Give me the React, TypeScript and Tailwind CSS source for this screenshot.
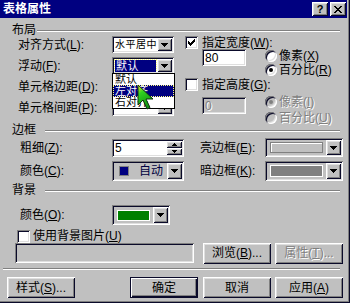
import React from "react";

const SUNKEN =
  "shadow-[inset_1px_1px_0_#808080,inset_-1px_-1px_0_#ffffff,inset_2px_2px_0_#0a0a2a,inset_-2px_-2px_0_#dfdfdf]";
const RAISED =
  "shadow-[inset_1px_1px_0_#ffffff,inset_-1px_-1px_0_#0a0a2a,inset_2px_2px_0_#dfdfdf,inset_-2px_-2px_0_#808080]";

function Acc({ k }: { k: string }) {
  return (
    <>
      (<span className="underline underline-offset-1">{k}</span>)
    </>
  );
}

function Arrow() {
  return (
    <svg width="7" height="4" viewBox="0 0 7 4" shapeRendering="crispEdges">
      <rect x="0" y="0" width="7" height="1" fill="#000" />
      <rect x="1" y="1" width="5" height="1" fill="#000" />
      <rect x="2" y="2" width="3" height="1" fill="#000" />
      <rect x="3" y="3" width="1" height="1" fill="#000" />
    </svg>
  );
}

function DropBtn() {
  return (
    <div className={`w-[15px] h-full flex items-center justify-center bg-[#c0c0c0] ${RAISED}`}>
      <Arrow />
    </div>
  );
}

function Combo({ text, focused, className }: { text?: string; focused?: boolean; className: string }) {
  return (
    <div className={`flex p-[2px] bg-white ${SUNKEN} ${className}`}>
      <div className="flex-1 min-w-0 flex items-center pl-[1px] overflow-hidden whitespace-nowrap text-[10px] tracking-[0.5px]">
        {focused ? (
          <div className="w-full mr-[1px] h-[12px] bg-[#000080] text-white outline-1 outline-dotted outline-[#ffff80] leading-[12px] pl-[1px] text-[11px]">
            {text}
          </div>
        ) : (
          <span>{text}</span>
        )}
      </div>
      <DropBtn />
    </div>
  );
}

function Check({ checked }: { checked?: boolean }) {
  return (
    <div className={`w-[13px] h-[13px] bg-white ${SUNKEN} flex items-center justify-center`}>
      {checked && (
        <svg width="7" height="7" viewBox="0 0 7 7" shapeRendering="crispEdges">
          <path d="M0 2h1v1h1v1h1v-1h1v-1h1v-1h1v-1h1v3h-1v1h-1v1h-1v1h-1v1h-1v-1h-1v-1h-1z" fill="#000" />
        </svg>
      )}
    </div>
  );
}

function Radio({ checked, disabled }: { checked?: boolean; disabled?: boolean }) {
  return (
    <div
      className={`w-[12px] h-[12px] rounded-full flex items-center justify-center ${
        disabled ? "bg-[#c0c0c0]" : "bg-white"
      } shadow-[inset_1px_1px_0_#808080,inset_-1px_-1px_0_#ffffff,inset_2px_2px_0_#0a0a2a,inset_-2px_-2px_0_#dfdfdf]`}
    >
      {checked && <div className={`w-[4px] h-[4px] rounded-full ${disabled ? "bg-[#808080]" : "bg-black"}`} />}
    </div>
  );
}

function Header({ label, lineMl }: { label: string; lineMl: string }) {
  return (
    <div className="flex h-[12px] pl-[12px] pr-[7px]">
      <span className="leading-[12px]">{label}</span>
      <div className={`flex-1 self-start mt-[6px] border-t border-t-[#808080] border-b border-b-white ${lineMl}`} />
    </div>
  );
}

function Button({ children, className, def, disabled }: { children: React.ReactNode; className: string; def?: boolean; disabled?: boolean }) {
  return (
    <div
      className={`h-[21px] flex items-center justify-center bg-[#c0c0c0] ${
        def
          ? "shadow-[inset_1px_1px_0_#0a0a2a,inset_-1px_-1px_0_#0a0a2a,inset_2px_2px_0_#ffffff,inset_-2px_-2px_0_#0a0a2a,inset_-3px_-3px_0_#808080]"
          : RAISED
      } ${disabled ? "text-[#808080] [text-shadow:1px_1px_0_#ffffff]" : ""} ${className}`}
    >
      {children}
    </div>
  );
}

function ColorField({ className, children }: { className: string; children: React.ReactNode }) {
  return (
    <div className={`flex p-[2px] bg-[#c0c0c0] ${SUNKEN} ${className}`}>
      <div className="flex-1 flex items-center px-[3px]">{children}</div>
      <DropBtn />
    </div>
  );
}

export default function App() {
  return (
    <div className="w-[350px] h-[303px] relative overflow-hidden bg-[#c0c0c0] pr-[3px] pb-[3px] text-[12px] leading-[12px] text-black font-['Liberation_Sans','Noto_Sans_CJK_SC',sans-serif] shadow-[inset_-1px_-1px_0_#0a0a2a,inset_-2px_-2px_0_#808080]">
      {/* title bar */}
      <div className="h-[18px] bg-[#000080] flex items-center pl-[3px] pr-[1px]">
        <span className="text-white font-bold text-[12px] flex-1">表格属性</span>
        <div className={`w-[16px] h-[14px] bg-[#c0c0c0] ${RAISED} flex items-center justify-center font-bold text-[11px]`}>?</div>
        <div className={`w-[16px] h-[14px] ml-[2px] bg-[#c0c0c0] ${RAISED} flex items-center justify-center`}>
          <svg width="8" height="7" viewBox="0 0 8 7" shapeRendering="crispEdges">
            <path d="M0 0h2v1h1v1h2v-1h1v-1h2v1h-1v1h-1v1h-1v1h1v1h1v1h1v1h-2v-1h-1v-1h-2v1h-1v1h-2v-1h1v-1h1v-1h1v-1h-1v-1h-1v-1h-1z" fill="#000" />
          </svg>
        </div>
      </div>

      {/* 布局 */}
      <div className="mt-[6px]">
        <Header label="布局" lineMl="ml-[1px]" />
      </div>
      <div className="flex h-[88px]">
        <div className="pl-[18px] flex flex-col gap-[4px]">
          <div className="flex items-center h-[17px]">
            <span className="w-[94px]">
              对齐方式<Acc k="L" />:
            </span>
            <Combo text="水平居中" className="w-[62px] h-[17px]" />
          </div>
          <div className="flex items-center h-[17px]">
            <span className="w-[94px]">
              浮动<Acc k="F" />:
            </span>
            <Combo text="默认" focused className="w-[62px] h-[17px]" />
          </div>
          <div className="flex items-center h-[17px]">
            <span className="w-[94px]">
              单元格边距<Acc k="D" />:
            </span>
            <Combo className="w-[62px] h-[17px]" />
          </div>
          <div className="flex items-center h-[17px]">
            <span className="w-[94px]">
              单元格间距<Acc k="P" />:
            </span>
            <Combo className="w-[62px] h-[17px]" />
          </div>
        </div>
        <div className="ml-[11px] flex flex-col">
          <div className="flex items-center h-[15px]">
            <Check checked />
            <span className="ml-[4px]">
              指定宽度<Acc k="W" />:
            </span>
          </div>
          <div className="flex h-[28px]">
            <div className={`ml-[17px] w-[44px] h-[17px] bg-white ${SUNKEN} flex items-center pl-[3px]`}>80</div>
            <div className="ml-[19px] flex flex-col">
              <div className="flex items-center h-[14px]">
                <Radio />
                <span className="ml-[2px]">
                  像素<Acc k="X" />
                </span>
              </div>
              <div className="flex items-center h-[14px]">
                <Radio checked />
                <span className="ml-[2px]">
                  百分比<Acc k="R" />
                </span>
              </div>
            </div>
          </div>
          <div className="flex items-center h-[15px] mt-[1px]">
            <Check />
            <span className="ml-[4px]">
              指定高度<Acc k="G" />:
            </span>
          </div>
          <div className="flex h-[32px] mt-[3px]">
            <div className={`ml-[17px] mt-[3px] w-[44px] h-[17px] bg-[#c0c0c0] ${SUNKEN} flex items-center pl-[3px] text-[#808080] [text-shadow:1px_1px_0_#ffffff]`}>
              0
            </div>
            <div className="ml-[19px] flex flex-col text-[#808080] [text-shadow:1px_1px_0_#ffffff]">
              <div className="flex items-center h-[16px]">
                <Radio checked disabled />
                <span className="ml-[2px]">
                  像素<Acc k="I" />
                </span>
              </div>
              <div className="flex items-center h-[16px]">
                <Radio disabled />
                <span className="ml-[2px]">
                  百分比<Acc k="U" />
                </span>
              </div>
            </div>
          </div>
        </div>
      </div>

      {/* 边框 */}
      <Header label="边框" lineMl="ml-[9px]" />
      <div className="h-[48px] pl-[20px] pt-[2px] flex flex-col gap-[4px]">
        <div className="flex items-center h-[19px]">
          <span className="w-[92px]">
            粗细<Acc k="Z" />:
          </span>
          <div className={`w-[72px] h-[18px] flex p-[2px] bg-white ${SUNKEN}`}>
            <div className="flex-1 flex items-center pl-[1px]">5</div>
            <div className="w-[16px] flex flex-col">
              <div className={`flex-1 bg-[#c0c0c0] ${RAISED} flex items-center justify-center`}>
                <svg width="5" height="3" viewBox="0 0 5 3" shapeRendering="crispEdges">
                  <path d="M2 0h1v1h1v1h1v1h-5v-1h1v-1h1z" fill="#000" />
                </svg>
              </div>
              <div className={`flex-1 bg-[#c0c0c0] ${RAISED} flex items-center justify-center`}>
                <svg width="5" height="3" viewBox="0 0 5 3" shapeRendering="crispEdges">
                  <path d="M0 0h5v1h-1v1h-1v1h-1v-1h-1v-1h-1z" fill="#000" />
                </svg>
              </div>
            </div>
          </div>
          <span className="ml-[16px] w-[65px]">
            亮边框<Acc k="E" />:
          </span>
          <ColorField className="w-[78px] h-[19px]">
            <div className="w-full h-[11px] border border-[#808080] bg-[#c0c0c0] shadow-[inset_1px_1px_0_#ffffff]" />
          </ColorField>
        </div>
        <div className="flex items-center h-[20px]">
          <span className="w-[92px]">
            颜色<Acc k="C" />:
          </span>
          <ColorField className="w-[72px] h-[20px]">
            <div className="w-[10px] h-[10px] bg-[#000080] ml-[2px] border border-[#808080]" />
            <span className="ml-[10px] text-[#000040]">自动</span>
          </ColorField>
          <span className="ml-[16px] w-[65px]">
            暗边框<Acc k="K" />:
          </span>
          <ColorField className="w-[78px] h-[20px]">
            <div className="w-full h-[12px] border border-white bg-[#808080]" />
          </ColorField>
        </div>
      </div>

      {/* 背景 */}
      <Header label="背景" lineMl="ml-[9px]" />
      <div className="pl-[20px] pt-[9px] flex items-center h-[29px]">
        <span className="w-[92px]">
          颜色<Acc k="O" />:
        </span>
        <ColorField className="w-[58px] h-[20px]">
          <div className="w-full h-[11px] bg-[#008000] border border-white" />
        </ColorField>
      </div>
      <div className="pl-[17px] mt-[4px] flex items-center h-[14px]">
        <Check />
        <span className="ml-[3px]">
          使用背景图片<Acc k="U" />
        </span>
      </div>
      <div className="pl-[15px] flex items-center h-[20px]">
        <div className={`w-[179px] h-[20px] bg-[#c0c0c0] ${SUNKEN}`} />
        <Button className="ml-[9px] w-[68px] h-[20px]">
          浏览<Acc k="B" />...
        </Button>
        <Button disabled className="ml-[4px] w-[68px] h-[20px]">
          属性<Acc k="T" />...
        </Button>
      </div>
      <div className="ml-[3px] mr-[7px] mt-[5px] border-t border-t-[#808080] border-b border-b-white" />
      <div className="pl-[7px] mt-[7px] flex">
        <Button className="w-[68px]">
          样式<Acc k="S" />...
        </Button>
        <Button def className="ml-[55px] w-[68px]">
          确定
        </Button>
        <Button className="ml-[5px] w-[68px]">取消</Button>
        <Button className="ml-[4px] w-[68px]">
          应用<Acc k="A" />
        </Button>
      </div>

      {/* open dropdown list */}
      <div className="absolute left-[112px] top-[73px] w-[63px] h-[36px] bg-white border border-black flex flex-col text-[11px] whitespace-nowrap overflow-hidden">
        <div className="h-[11px] leading-[11px] pl-[2px] overflow-hidden">默认</div>
        <div className="h-[12px] leading-[12px] pl-[2px] overflow-hidden bg-[#000080] text-white outline-1 outline-dotted outline-[#ffff80] -outline-offset-1">
          左对齐
        </div>
        <div className="h-[11px] leading-[11px] pl-[2px] overflow-hidden">右对齐</div>
      </div>

      {/* cursor */}
      <svg className="absolute left-[137px] top-[84px]" width="17" height="27" viewBox="0 0 17 27">
        <defs>
          <linearGradient id="cg" x1="0" y1="0" x2="0.4" y2="1">
            <stop offset="0" stopColor="#f0f020" />
            <stop offset="0.35" stopColor="#30d020" />
            <stop offset="1" stopColor="#109010" />
          </linearGradient>
        </defs>
        <path d="M1 1 L1 21 L6 16 L10 25 L13 23.5 L9 15 L16 15 Z" fill="url(#cg)" stroke="#103010" strokeWidth="1" strokeLinejoin="miter" />
      </svg>
    </div>
  );
}
